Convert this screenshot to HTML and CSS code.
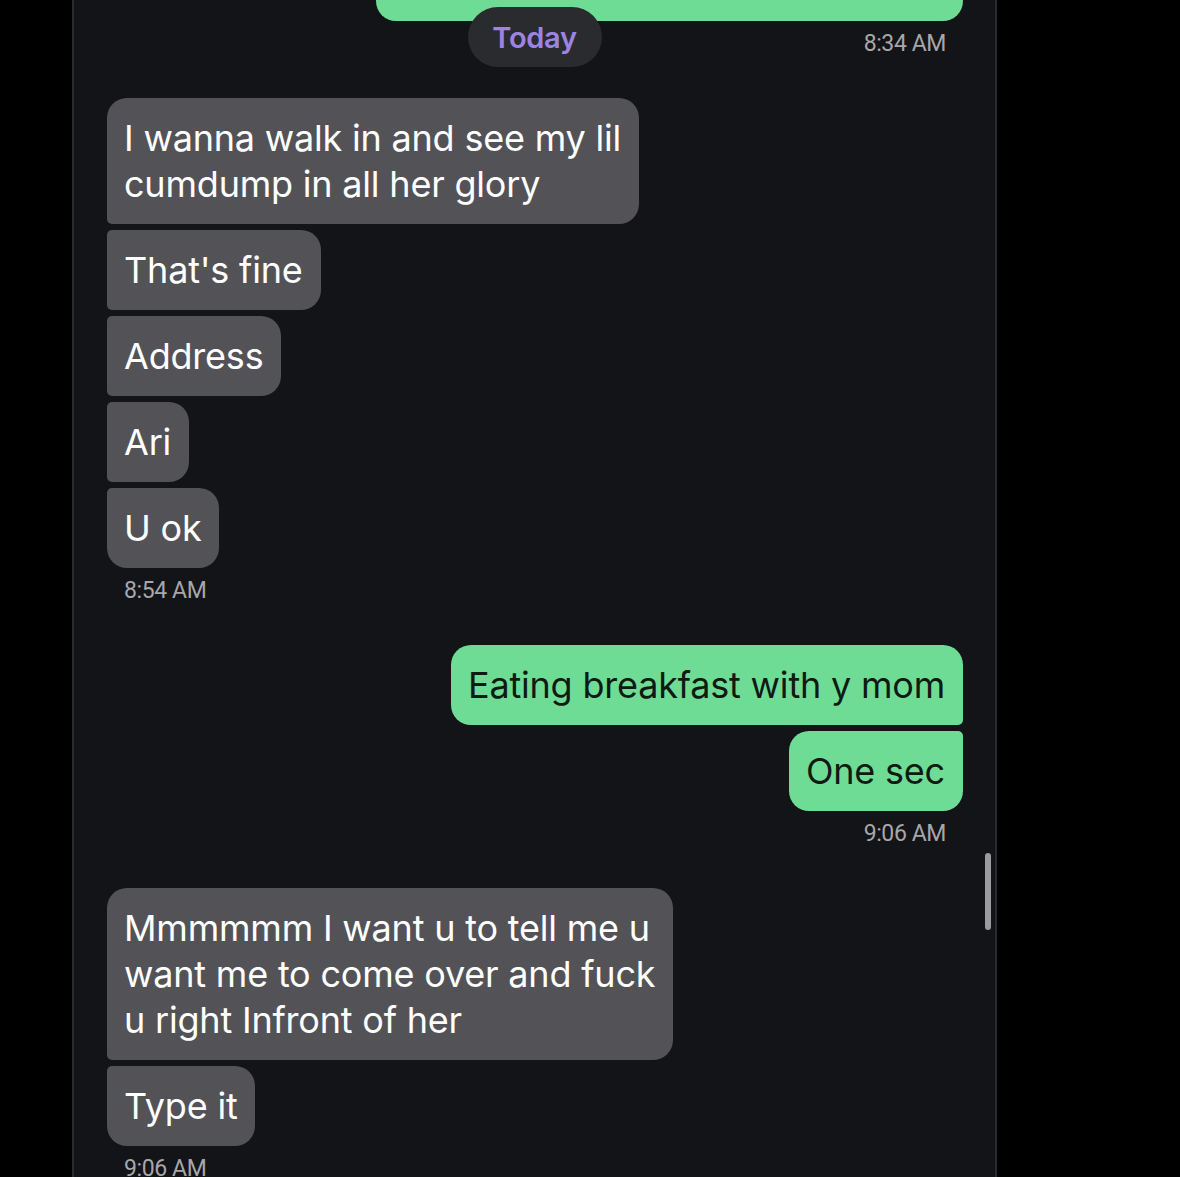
FILE: index.html
```html
<!DOCTYPE html>
<html lang="en">
<head>
    <meta charset="UTF-8">
    <meta name="viewport" content="width=device-width, initial-scale=1.0">
    <title>Messages</title>
    <link rel="stylesheet" href="styles.css">
</head>
<body>
    <div class="panel">
        <div class="date-pill">Today</div>
        <div class="scroll-thumb"></div>

        <div class="thread">
            <div class="group sent">
                <div class="bubble cut"></div>
                <div class="time">8:34 AM</div>
            </div>

            <div class="group received">
                <div class="bubble">I wanna walk in and see my lil<br>cumdump in all her glory</div>
                <div class="bubble">That's fine</div>
                <div class="bubble">Address</div>
                <div class="bubble">Ari</div>
                <div class="bubble">U ok</div>
                <div class="time">8:54 AM</div>
            </div>

            <div class="group sent">
                <div class="bubble">Eating breakfast with y mom</div>
                <div class="bubble">One sec</div>
                <div class="time">9:06 AM</div>
            </div>

            <div class="group received">
                <div class="bubble">Mmmmmm I want u to tell me u<br>want me to come over and fuck<br>u right Infront of her</div>
                <div class="bubble">Type it</div>
                <div class="time">9:06 AM</div>
            </div>
        </div>
    </div>
</body>
</html>
```

FILE: styles.css
```css
* {
    margin: 0;
    padding: 0;
    box-sizing: border-box;
}

body {
    background: #000;
    font-family: Inter, 'Noto Sans', sans-serif;
    overflow: hidden;
    height: 1177px;
}

.panel {
    position: relative;
    margin-left: 72px;
    width: 925px;
    height: 1177px;
    background: #131417;
    border-left: 2px solid #2a2b2e;
    border-right: 2px solid #2a2b2e;
    overflow: hidden;
}

.thread {
    display: flex;
    flex-direction: column;
    gap: 41px;
    padding: 0 32px 0 33px;
    margin-top: -59px;
}

.group {
    display: flex;
    flex-direction: column;
    gap: 6px;
}

.group.received {
    align-items: flex-start;
}

.group.sent {
    align-items: flex-end;
}

.bubble {
    font-size: 36px;
    line-height: 46px;
    letter-spacing: -0.2px;
    padding: 17px 18px 17px 17px;
    border-radius: 5px;
}

.received .bubble {
    background: #535357;
    color: #fff;
    border-top-right-radius: 20px;
    border-bottom-right-radius: 20px;
}

.received .bubble:first-child {
    border-top-left-radius: 20px;
}

.received .bubble:nth-last-child(2) {
    border-bottom-left-radius: 20px;
}

.sent .bubble {
    background: #6fdc96;
    color: #0e1a12;
    border-top-left-radius: 20px;
    border-bottom-left-radius: 20px;
}

.sent .bubble:first-child {
    border-top-right-radius: 20px;
}

.sent .bubble:nth-last-child(2) {
    border-bottom-right-radius: 20px;
}

.bubble.cut {
    width: 587px;
    height: 80px;
}

.time {
    margin-top: 4px;
    padding: 0 17px;
    font-family: Roboto, 'Liberation Sans', sans-serif;
    font-size: 23px;
    line-height: 26px;
    letter-spacing: -0.4px;
    color: #a7a7aa;
}

.date-pill {
    position: absolute;
    top: 7px;
    left: 50%;
    transform: translateX(-50%);
    width: 134px;
    height: 60px;
    border-radius: 30px;
    background: #2a2b2e;
    color: #9d84e3;
    font-size: 29px;
    font-weight: 600;
    letter-spacing: -0.3px;
    display: flex;
    align-items: center;
    justify-content: center;
    z-index: 2;
}

.scroll-thumb {
    position: absolute;
    top: 853px;
    right: 4px;
    width: 6px;
    height: 77px;
    border-radius: 3px;
    background: #9b9b9c;
}
```
